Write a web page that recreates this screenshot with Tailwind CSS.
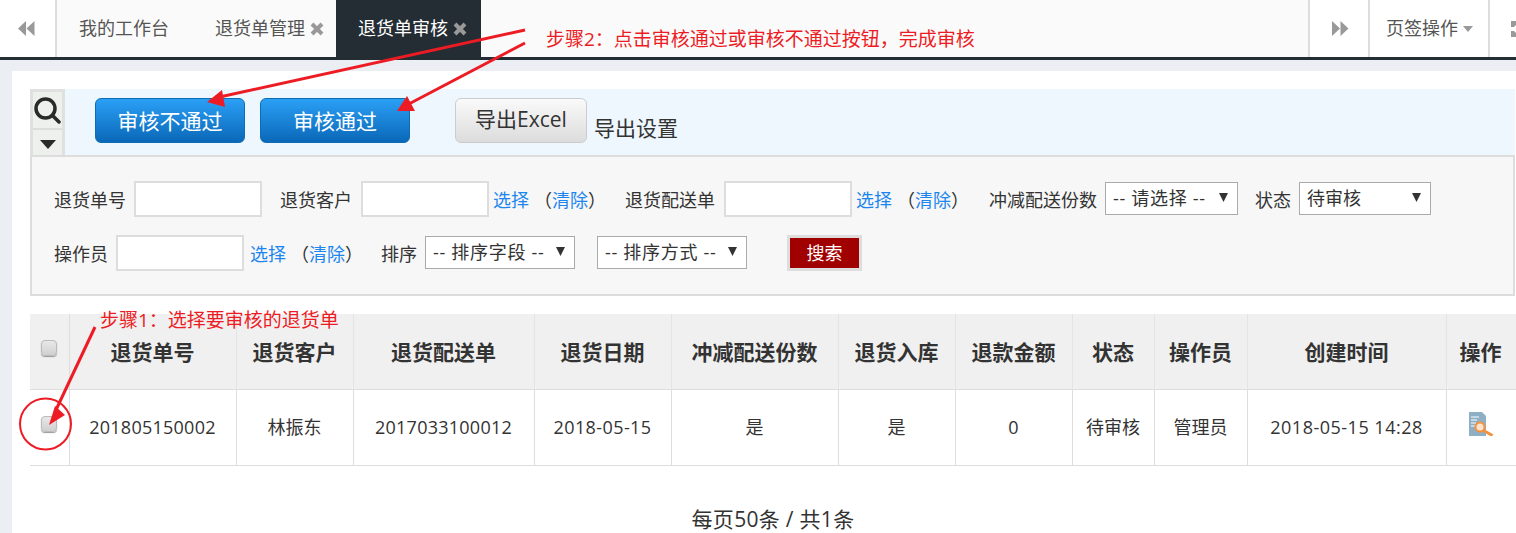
<!DOCTYPE html>
<html lang="zh-CN">
<head>
    <meta charset="UTF-8">
    <title>退货单审核</title>
    <script src="https://cdn.jsdelivr.net/npm/@tailwindcss/browser@4"></script>
</head>
<body class="relative h-[533px] overflow-hidden bg-[#ebeef3] font-['Open_Sans','Noto_Sans_CJK_SC',sans-serif] text-[18px] text-[#333]">

    <!-- 页签栏 -->
    <div class="flex h-[60px] border-b-[3px] border-[#242d33] bg-[#fafafa] text-[#555]">
        <div class="flex w-[57px] shrink-0 items-center justify-center border-r-2 border-[#ddd] bg-white pr-[3px]">
            <svg width="17" height="15" viewBox="0 0 17 15" fill="#999"><path d="M8 0v15L0 7.500zM16.500 0v15L8.500 7.500z"/></svg>
        </div>
        <div class="flex items-center pl-[22px] pr-[46px]">我的工作台</div>
        <div class="flex w-[121px] items-center gap-[5px]">
            退货单管理
            <svg width="14" height="14" viewBox="0 0 14 14" stroke="#999" stroke-width="4"><path d="M2 2l10 10M12 2L2 12"/></svg>
        </div>
        <div class="flex w-[145px] items-center gap-[5px] bg-[#242d33] pl-[22px] text-white">
            退货单审核
            <svg width="14" height="14" viewBox="0 0 14 14" stroke="#999" stroke-width="4"><path d="M2 2l10 10M12 2L2 12"/></svg>
        </div>
        <div class="flex-1"></div>
        <div class="flex w-[62px] shrink-0 items-center justify-center border-x-2 border-[#ddd] bg-white pl-[2px]">
            <svg width="17" height="15" viewBox="0 0 17 15" fill="#999"><path d="M0 0v15l8-7.500zM8.500 0v15l8-7.500z"/></svg>
        </div>
        <div class="flex w-[120px] shrink-0 items-center gap-[5px] border-r-2 border-[#ddd] bg-white pl-[16px]">
            页签操作
            <svg width="10" height="6" viewBox="0 0 10 6" fill="#999"><path d="M0 0h10L5 6z"/></svg>
        </div>
        <div class="flex w-[26px] shrink-0 items-center overflow-hidden bg-white pl-[21px]">
            <svg class="shrink-0" width="16" height="16" viewBox="0 0 16 16" fill="#999"><path d="M0 0h6v3L3 6H0zM0 16h6v-3l-3-3H0z"/></svg>
        </div>
    </div>

    <div class="ml-[12px] mt-[11px] h-[462px] overflow-hidden bg-white pl-[18px] pr-[1px] pt-[18px]">

        <!-- 工具栏 -->
        <div class="flex h-[66px] bg-[#eef6fe]">
            <div class="flex w-[35px] shrink-0 flex-col border-x-[3px] border-t-[3px] border-[#e0e0e0] bg-[#eef0ee]">
                <div class="flex h-[38px] shrink-0 items-center justify-center border-b-2 border-[#ddd]">
                    <svg width="27" height="27" viewBox="0 0 27 27" fill="none" stroke="#2a2a2a"><circle cx="11.500" cy="11.500" r="9.500" stroke-width="3.500"/><path d="M18.500 18.500l6.500 6.500" stroke-width="3.500" stroke-linecap="round"/></svg>
                </div>
                <div class="flex flex-1 items-center justify-center pt-[3px]">
                    <svg width="16" height="9" viewBox="0 0 16 9" fill="#2a2a2a"><path d="M0 0h16L8 9z"/></svg>
                </div>
            </div>
            <button class="ml-[30px] mt-[9px] h-[45px] w-[150px] rounded-[6px] border border-[#0c6cb4] bg-gradient-to-b from-[#2aa0f6] to-[#0a68b8] pt-[3px] text-[21px] text-white">审核不通过</button>
            <button class="ml-[15px] mt-[9px] h-[45px] w-[150px] rounded-[6px] border border-[#0c6cb4] bg-gradient-to-b from-[#2aa0f6] to-[#0a68b8] pt-[3px] text-[21px] text-white">审核通过</button>
            <button class="ml-[45px] mt-[9px] h-[45px] w-[132px] rounded-[6px] border border-[#ccc] bg-gradient-to-b from-[#fafafa] to-[#dcdcdc] pb-[1px] text-[21px]">导出Excel</button>
            <span class="ml-[7px] mt-[24px] text-[21px] leading-[30px]">导出设置</span>
        </div>

        <!-- 搜索条件 -->
        <div class="h-[141px] border-2 border-[#ddd] bg-[#f7f7f7] pl-[22px] pt-[24px]">
            <div class="flex h-[36px] items-start whitespace-nowrap leading-[38px]">
                <span class="w-[80px]">退货单号</span>
                <input class="h-[36px] w-[128px] border-2 border-[#ddd] bg-white">
                <span class="ml-[18px] w-[81px]">退货客户</span>
                <input class="h-[36px] w-[128px] border-2 border-[#ddd] bg-white">
                <a class="ml-[4px] text-[#1c86ee]">选择</a>
                <span class="ml-[5px] w-[67px]">（<a class="text-[#1c86ee]">清除</a>）</span>
                <span class="ml-[24px] w-[99px]">退货配送单</span>
                <input class="h-[36px] w-[128px] border-2 border-[#ddd] bg-white">
                <a class="ml-[4px] text-[#1c86ee]">选择</a>
                <span class="ml-[5px] w-[67px]">（<a class="text-[#1c86ee]">清除</a>）</span>
                <span class="ml-[25px] w-[116px]">冲减配送份数</span>
                <div class="relative mt-[1px] h-[33px] w-[133px]">
                    <select class="block h-full w-full appearance-none border border-[#aaa] bg-white pl-[7px] leading-[31px] tracking-[0.7px]"><option>-- 请选择 --</option></select>
                    <svg class="absolute right-[10px] top-[11px]" width="9" height="9" viewBox="0 0 9 9" fill="#333"><path d="M0 0h9L4.500 9z"/></svg>
                </div>
                <span class="ml-[17px] w-[44px]">状态</span>
                <div class="relative mt-[1px] h-[33px] w-[132px]">
                    <select class="block h-full w-full appearance-none border border-[#aaa] bg-white pl-[7px] leading-[31px]"><option>待审核</option></select>
                    <svg class="absolute right-[10px] top-[11px]" width="9" height="9" viewBox="0 0 9 9" fill="#333"><path d="M0 0h9L4.500 9z"/></svg>
                </div>
            </div>
            <div class="mt-[18px] flex h-[36px] items-start whitespace-nowrap leading-[38px]">
                <span class="w-[62px]">操作员</span>
                <input class="h-[36px] w-[128px] border-2 border-[#ddd] bg-white">
                <a class="ml-[6px] text-[#1c86ee]">选择</a>
                <span class="ml-[5px] w-[67px]">（<a class="text-[#1c86ee]">清除</a>）</span>
                <span class="ml-[23px] w-[44px]">排序</span>
                <div class="relative mt-[1px] h-[33px] w-[150px]">
                    <select class="block h-full w-full appearance-none border border-[#aaa] bg-white pl-[7px] leading-[31px] tracking-[0.7px]"><option>-- 排序字段 --</option></select>
                    <svg class="absolute right-[10px] top-[11px]" width="9" height="9" viewBox="0 0 9 9" fill="#333"><path d="M0 0h9L4.500 9z"/></svg>
                </div>
                <div class="relative ml-[22px] mt-[1px] h-[33px] w-[150px]">
                    <select class="block h-full w-full appearance-none border border-[#aaa] bg-white pl-[7px] leading-[31px] tracking-[0.7px]"><option>-- 排序方式 --</option></select>
                    <svg class="absolute right-[10px] top-[11px]" width="9" height="9" viewBox="0 0 9 9" fill="#333"><path d="M0 0h9L4.500 9z"/></svg>
                </div>
                <button class="ml-[40px] h-[36px] w-[75px] border-[3px] border-[#ddd] bg-[#a00000] leading-[28px] text-white">搜索</button>
            </div>
        </div>

        <!-- 列表 -->
        <table class="mt-[18px] w-[1520px] table-fixed border-collapse text-center">
            <colgroup>
                <col class="w-[39px]"><col class="w-[167px]"><col class="w-[117px]"><col class="w-[181px]"><col class="w-[137px]"><col class="w-[167px]"><col class="w-[117px]"><col class="w-[117px]"><col class="w-[82px]"><col class="w-[93px]"><col class="w-[199px]"><col class="w-[104px]">
            </colgroup>
            <thead class="bg-[#f0f0f0] text-[21px] font-bold">
                <tr class="h-[75px] border-b border-[#ddd]">
                    <th class="border-r border-[#ddd]"><input type="checkbox" class="mx-auto mb-[6px] block h-[16px] w-[16px] appearance-none rounded-[4px] border border-[#bbb] bg-gradient-to-b from-[#e8e8e8] to-[#d0d0d0] shadow-[0_1px_1px_#999]"></th>
                    <th class="border-x border-[#e4e4e4] pt-[3px]">退货单号</th>
                    <th class="border-x border-[#e4e4e4] pt-[3px]">退货客户</th>
                    <th class="border-x border-[#e4e4e4] pt-[3px]">退货配送单</th>
                    <th class="border-x border-[#e4e4e4] pt-[3px]">退货日期</th>
                    <th class="border-x border-[#e4e4e4] pt-[3px]">冲减配送份数</th>
                    <th class="border-x border-[#e4e4e4] pt-[3px]">退货入库</th>
                    <th class="border-x border-[#e4e4e4] pt-[3px]">退款金额</th>
                    <th class="border-x border-[#e4e4e4] pt-[3px]">状态</th>
                    <th class="border-x border-[#e4e4e4] pt-[3px]">操作员</th>
                    <th class="border-x border-[#e4e4e4] pt-[3px]">创建时间</th>
                    <th class="border-x border-[#e4e4e4] pr-[35px] pt-[3px]">操作</th>
                </tr>
            </thead>
            <tbody>
                <tr class="h-[76px] border-b border-[#ddd]">
                    <td class="border-r border-[#ddd]"><input type="checkbox" class="mx-auto mb-[6px] block h-[16px] w-[16px] appearance-none rounded-[4px] border border-[#bbb] bg-gradient-to-b from-[#e8e8e8] to-[#d0d0d0] shadow-[0_1px_1px_#999]"></td>
                    <td class="border-x border-[#ddd] tracking-[0.25px]">201805150002</td>
                    <td class="border-x border-[#ddd]">林振东</td>
                    <td class="border-x border-[#ddd] tracking-[0.25px]">2017033100012</td>
                    <td class="border-x border-[#ddd] tracking-[0.4px]">2018-05-15</td>
                    <td class="border-x border-[#ddd]">是</td>
                    <td class="border-x border-[#ddd]">是</td>
                    <td class="border-x border-[#ddd]">0</td>
                    <td class="border-x border-[#ddd]">待审核</td>
                    <td class="border-x border-[#ddd]">管理员</td>
                    <td class="border-x border-[#ddd] tracking-[0.5px]">2018-05-15 14:28</td>
                    <td class="border-x border-[#ddd] pl-[22px] text-left">
                        <svg class="mb-[6px]" width="25" height="24" viewBox="0 0 25 24">
                            <path d="M0 0h13l4 4v20H0z" fill="#8fb0c4"/>
                            <path d="M2 5h8M2 8h6M2 11h5M2 14h5" stroke="#fff" stroke-width="1"/>
                            <circle cx="11" cy="15" r="4.500" fill="#fde3cf" stroke="#f5923e" stroke-width="2"/>
                            <path d="M14.500 18.500l9 5" stroke="#f5923e" stroke-width="3"/>
                        </svg>
                    </td>
                </tr>
            </tbody>
        </table>

        <div class="mt-[39px] w-[1486px] text-center text-[21px] leading-[28px] tracking-[0.3px]">每页50条 / 共1条</div>
    </div>

    <!-- 标注 -->
    <span class="absolute left-[546px] top-[25px] whitespace-nowrap text-[19px] leading-[28px] text-[#ed1c24]">步骤2：点击审核通过或审核不通过按钮，完成审核</span>
    <span class="absolute left-[100px] top-[306px] whitespace-nowrap text-[19px] leading-[28px] text-[#ed1c24]">步骤1：选择要审核的退货单</span>
    <svg class="pointer-events-none absolute left-0 top-0" width="1516" height="533" viewBox="0 0 1516 533" fill="none">
        <g stroke="#ed1c24" stroke-width="3">
            <path d="M525 30L215 98"/>
            <path d="M525 43L405 106"/>
            <path d="M95 327L55 412"/>
            <circle cx="45.500" cy="424" r="25.500" stroke-width="2"/>
        </g>
        <g fill="#ed1c24">
            <path d="M207 102L222 90L225 107z"/>
            <path d="M397 111L407 96L415 111z"/>
            <path d="M49 425L55 406L65 415z"/>
        </g>
    </svg>
</body>
</html>
